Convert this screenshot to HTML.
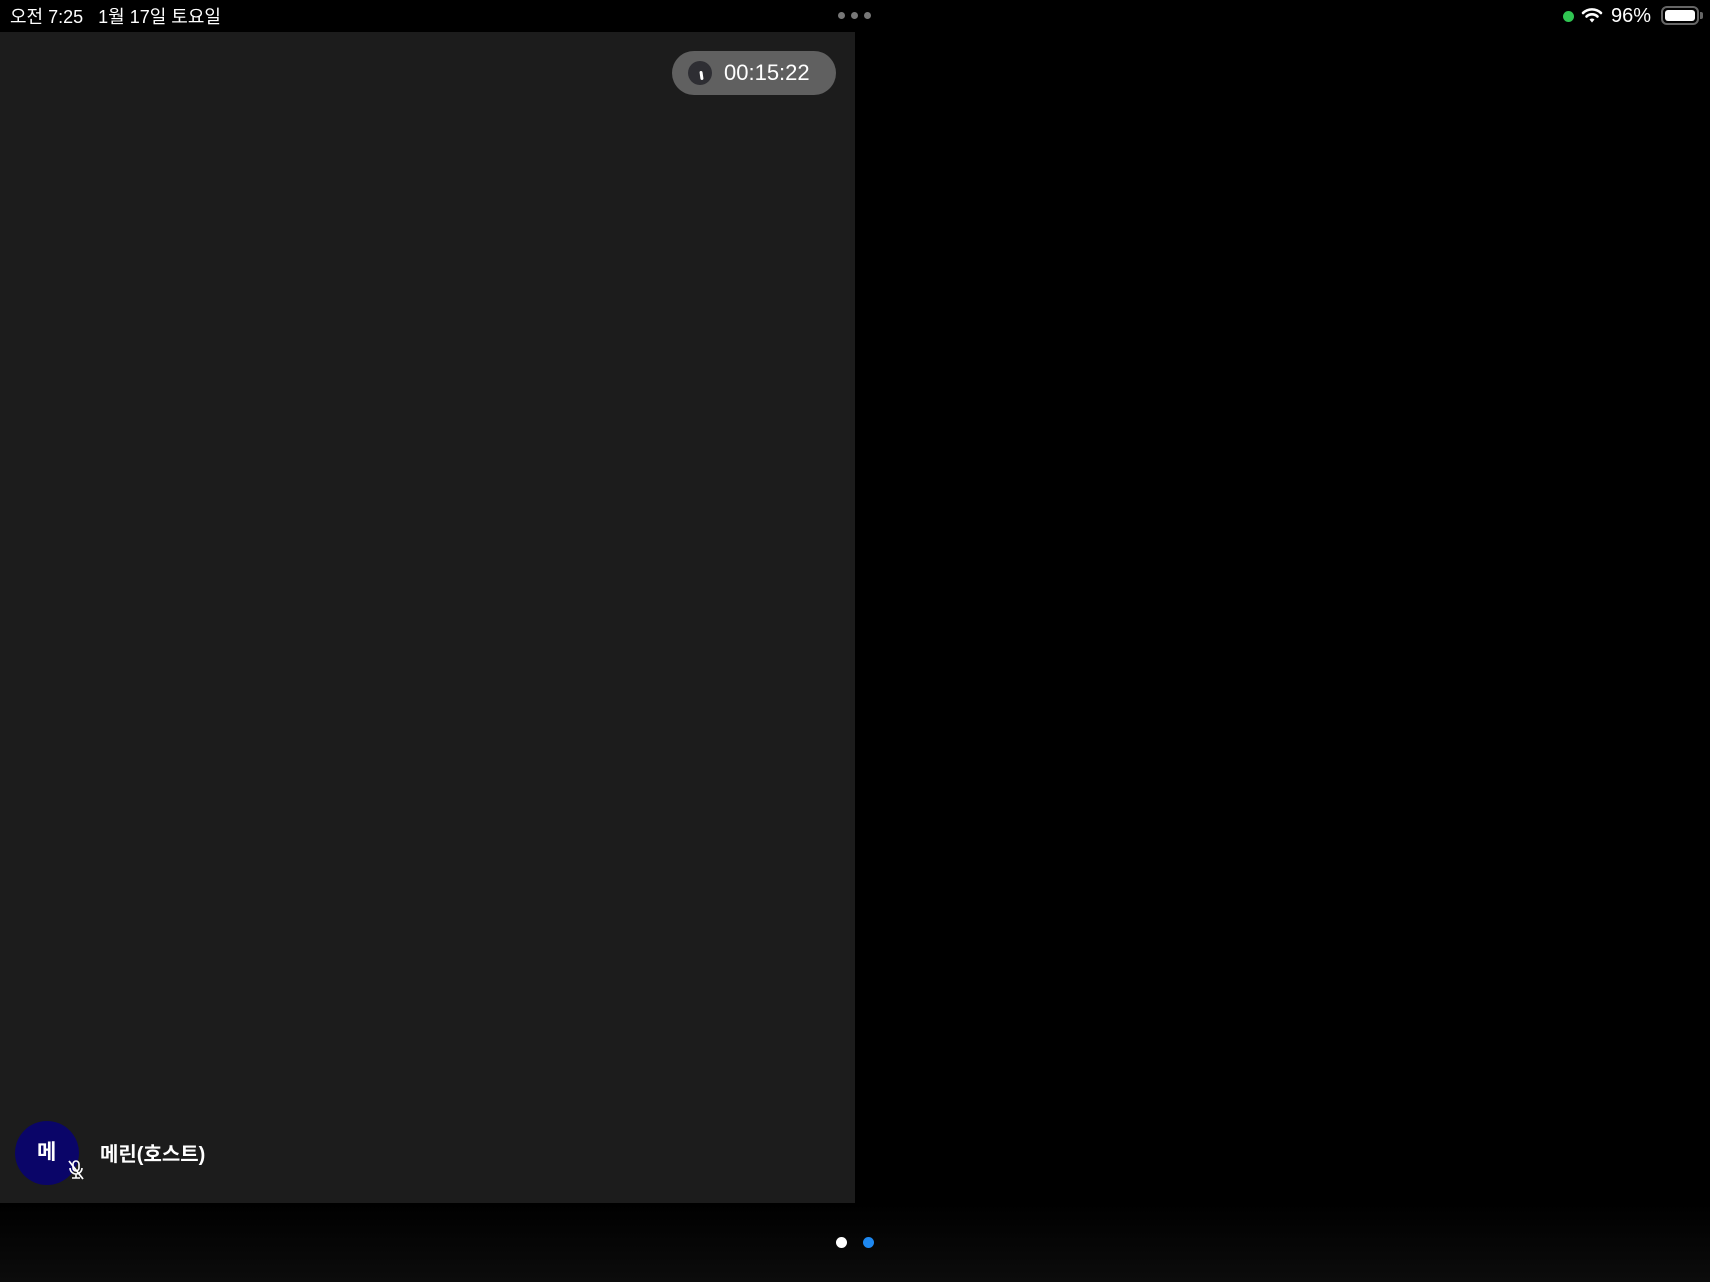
<!DOCTYPE html>
<html><head><meta charset="utf-8"><style>
*{margin:0;padding:0;box-sizing:border-box}
body{width:1710px;height:1282px;background:#000;position:relative;overflow:hidden;font-family:"Liberation Sans","Noto Sans CJK KR",sans-serif;color:#fff}
.abs{position:absolute}
</style></head><body>
<div class="abs" style="left:10px;top:5px;font-size:18px;line-height:24px;white-space:pre">오전 7:25   1월 17일 토요일</div>
<div class="abs" style="left:838px;top:12px;width:7px;height:7px;border-radius:50%;background:#777"></div>
<div class="abs" style="left:851px;top:12px;width:7px;height:7px;border-radius:50%;background:#777"></div>
<div class="abs" style="left:864px;top:12px;width:7px;height:7px;border-radius:50%;background:#777"></div>
<div class="abs" style="left:1563px;top:11px;width:11px;height:11px;border-radius:50%;background:#30c552"></div>
<svg class="abs" style="left:1581px;top:7px" width="22" height="17" viewBox="0 0 22 17"><path d="M2 6 A13 13 0 0 1 20 6" stroke="#fff" stroke-width="2.6" fill="none" stroke-linecap="round"/><path d="M5.5 9.5 A8 8 0 0 1 16.5 9.5" stroke="#fff" stroke-width="2.6" fill="none" stroke-linecap="round"/><path d="M8.5 12.5 L11 15.5 L13.5 12.5 A3.5 3.5 0 0 0 8.5 12.5Z" fill="#fff"/></svg>
<div class="abs" style="left:1611px;top:4px;font-size:20px;line-height:24px">96%</div>
<div class="abs" style="left:1661px;top:6px;width:38px;height:19px;border:2px solid #666;border-radius:6px;padding:2px"><div style="width:100%;height:100%;background:#fff;border-radius:3px"></div></div>
<div class="abs" style="left:1700px;top:12px;width:3px;height:7px;background:#666;border-radius:0 2px 2px 0"></div>

<div class="abs" style="left:0;top:32px;width:855px;height:1171px;background:#1c1c1c"></div>
<div class="abs" style="left:672px;top:51px;width:164px;height:44px;border-radius:22px;background:#606060"></div>
<div class="abs" style="left:688px;top:61px;width:24px;height:24px;border-radius:50%;background:#2e2e33"></div>
<div class="abs" style="left:700px;top:71px;width:3px;height:9px;background:#fff;border-radius:2px;transform:rotate(-8deg)"></div>
<div class="abs" style="left:724px;top:60px;font-size:22px;line-height:26px">00:15:22</div>

<div class="abs" style="left:15px;top:1121px;width:64px;height:64px;border-radius:50%;background:#0a0568"></div>
<div class="abs" style="left:37px;top:1141px;font-size:21px;line-height:24px;font-weight:bold">메</div>
<svg class="abs" style="left:66px;top:1159px" width="20" height="22" viewBox="0 0 20 22"><rect x="7" y="2" width="6" height="10" rx="3" stroke="#fff" stroke-width="1.6" fill="none"/><path d="M4 9 A6 6 0 0 0 16 9 M10 15 V19 M6 19 H14" stroke="#fff" stroke-width="1.6" fill="none"/><path d="M3 2 L17 20" stroke="#fff" stroke-width="1.8"/></svg>
<div class="abs" style="left:100px;top:1143px;font-size:20px;line-height:24px;font-weight:bold">메린(호스트)</div>

<div class="abs" style="left:0;top:1203px;width:1710px;height:79px;background:linear-gradient(#000,#0c0c0c)"></div>
<div class="abs" style="left:836px;top:1237px;width:11px;height:11px;border-radius:50%;background:#fff"></div>
<div class="abs" style="left:863px;top:1237px;width:11px;height:11px;border-radius:50%;background:#1e88f0"></div>
</body></html>
